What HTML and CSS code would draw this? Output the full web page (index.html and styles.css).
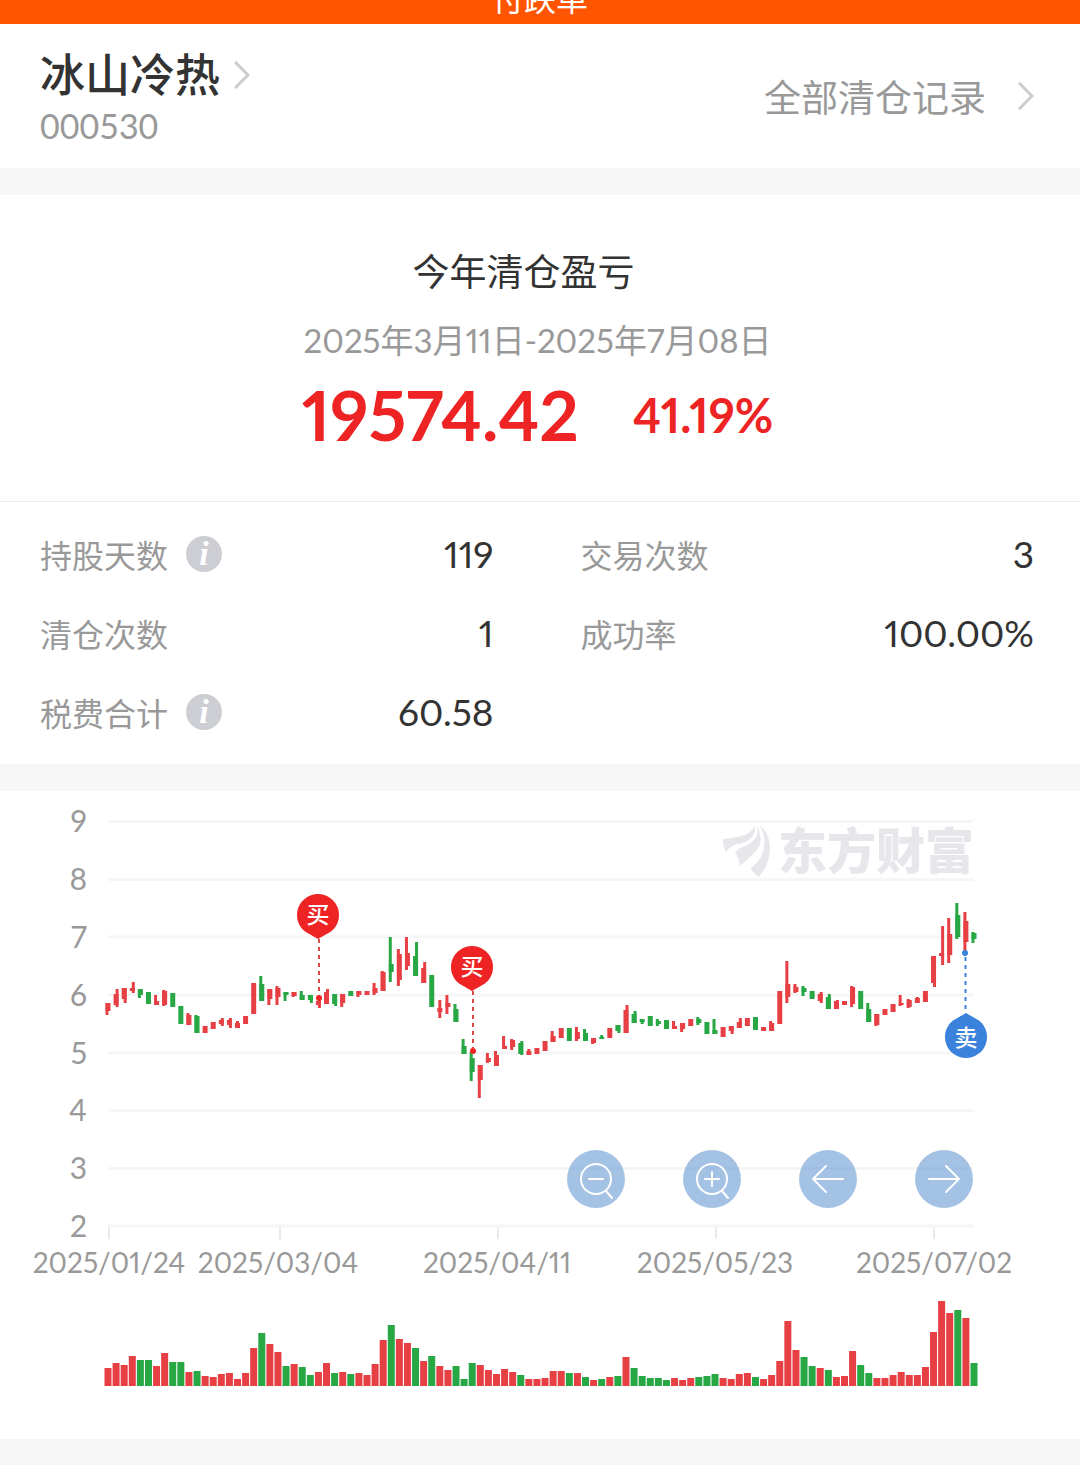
FILE: index.html
```html
<!DOCTYPE html>
<html lang="zh-CN">
<head>
<meta charset="utf-8">
<meta name="viewport" content="width=device-width, initial-scale=1">
<title>付跌单</title>
<link rel="stylesheet" href="styles.css">
</head>
<body>
<div class="topbar"><span class="topbar-title">付跌单</span></div>

<main>
  <header class="stock">
    <div class="stock-id">
      <a class="stock-link" href="#">
        <h1 class="stock-name">冰山冷热</h1>
        <svg class="chevron" viewBox="0 0 16 28" aria-hidden="true"><path d="M1 1 14 14 1 27"/></svg>
      </a>
      <div class="stock-code">000530</div>
    </div>
    <a class="records-link" href="#">
      <span>全部清仓记录</span>
      <svg class="chevron" viewBox="0 0 16 28" aria-hidden="true"><path d="M1 1 14 14 1 27"/></svg>
    </a>
  </header>

  <section class="summary">
    <h2 class="summary-title">今年清仓盈亏</h2>
    <div class="summary-range">2025年3月11日-2025年7月08日</div>
    <div class="summary-figures">
      <strong class="profit">19574.42</strong>
      <strong class="rate">41.19%</strong>
    </div>
  </section>

  <dl class="stats">
    <div class="stat"><dt>持股天数 <button class="info" type="button" aria-label="说明">i</button></dt><dd>119</dd></div>
    <div class="stat"><dt>交易次数</dt><dd>3</dd></div>
    <div class="stat"><dt>清仓次数</dt><dd>1</dd></div>
    <div class="stat"><dt>成功率</dt><dd>100.00%</dd></div>
    <div class="stat"><dt>税费合计 <button class="info" type="button" aria-label="说明">i</button></dt><dd>60.58</dd></div>
  </dl>

  <section class="chart">
    <svg class="chart-svg" viewBox="0 791 1080 648" role="img" aria-label="股价走势">
      <path class="grid" d="M108 821.5H973M108 879.5H973M108 937H973M108 995H973M108 1053H973M108 1110.5H973M108 1168.5H973M108 1226H974"/>
      <path class="tick" d="M109 1227V1239M280 1227V1239M498 1227V1239M716 1227V1239M934 1227V1239"/>
      <g class="watermark">
        <g transform="translate(700 810) scale(.3333)">
          <path d="M69 88C110 80 150 82 165 45C170 88 130 100 112 103C95 106 86 115 78 127C72 115 69 100 69 88Z"/>
          <path d="M169 45C185 80 150 105 128 111C118 114 111 120 107 126L122 168C134 150 185 125 182 85C181 68 175 54 169 45Z"/>
          <path d="M180 47C205 65 212 100 209 130C206 155 195 180 176 200C166 193 158 185 152 176C175 155 190 140 193 105C194 80 188 60 180 47Z"/>
        </g>
        <text x="778" y="869">东方财富</text>
      </g>
      <g class="axis axis-y">
        <text x="87" y="832">9</text><text x="87" y="890">8</text><text x="87" y="948">7</text><text x="87" y="1006">6</text>
        <text x="87" y="1064">5</text><text x="87" y="1121">4</text><text x="87" y="1179">3</text><text x="87" y="1237">2</text>
      </g>
      <g class="axis axis-x">
        <text x="109" y="1273">2025/01/24</text><text x="278" y="1273">2025/03/04</text><text x="497" y="1273">2025/04/11</text>
        <text x="715" y="1273">2025/05/23</text><text x="934" y="1273">2025/07/02</text>
      </g>
      <g id="candles"></g>
      <g id="volumes"></g>
      <g class="marker buy">
        <path class="lead" d="M319 939V996"/><circle cx="319" cy="998" r="3"/>
        <path d="M318 894A21 21 0 0 1 331 931.500L318 939L305 931.500A21 21 0 0 1 318 894Z"/>
        <text x="318" y="923">买</text>
      </g>
      <g class="marker buy">
        <path class="lead" d="M473 991V1048"/><circle cx="473" cy="1051" r="3"/>
        <path d="M472 946A21 21 0 0 1 485 983.500L472 991L459 983.500A21 21 0 0 1 472 946Z"/>
        <text x="472" y="975">买</text>
      </g>
      <g class="marker sell">
        <path class="lead" d="M965.500 957V1013"/><circle cx="965" cy="953" r="3"/>
        <path d="M966 1058A21 21 0 0 1 953 1020.500L966 1013L979 1020.500A21 21 0 0 1 966 1058Z"/>
        <text x="966" y="1046">卖</text>
      </g>
    </svg>
    <div class="chart-tools">
      <button type="button" aria-label="缩小"><svg viewBox="0 0 58 58"><circle cx="29" cy="29" r="15"/><path d="M22 29H36M39 41 45 48"/></svg></button>
      <button type="button" aria-label="放大"><svg viewBox="0 0 58 58"><circle cx="29" cy="29" r="15"/><path d="M22 29H36M29 22V36M39 41 45 48"/></svg></button>
      <button type="button" aria-label="向左"><svg viewBox="0 0 58 58"><path d="M44 29H14M27 16 14 29 27 42"/></svg></button>
      <button type="button" aria-label="向右"><svg viewBox="0 0 58 58"><path d="M14 29H44M31 16 44 29 31 42"/></svg></button>
    </div>
  </section>
</main>
<script src="chart.js"></script>
</body>
</html>
```

FILE: styles.css
```css
* { box-sizing: border-box; }

body {
  margin: 0;
  background: #fff;
  color: #333;
  font-family: Lato, "Noto Sans CJK SC", sans-serif;
  font-variant-numeric: proportional-nums;
}

a { color: inherit; text-decoration: none; }
button { border: 0; padding: 0; cursor: pointer; }

.topbar {
  display: flex;
  align-items: flex-end;
  justify-content: center;
  height: 24px;
  padding-bottom: 9px;
  overflow: hidden;
  background: #ff5400;
  color: #fff;
}
.topbar-title { font-size: 32px; line-height: 32px; }

.stock {
  display: flex;
  justify-content: space-between;
  padding: 26px 46px 17px 40px;
}
.stock-link { display: flex; align-items: center; gap: 14px; }
.stock-name { margin: 0; font-size: 45px; line-height: 50px; font-weight: 500; }
.stock-code { color: #999; font-size: 34px; line-height: 51px; font-variant-numeric: tabular-nums; }
.records-link {
  display: flex;
  align-items: center;
  gap: 32px;
  height: 92px;
  color: #999;
  font-size: 37px;
}
.chevron { width: 16px; height: 28px; fill: none; stroke: #ccc; stroke-width: 3; }

.summary {
  padding: 50px 5px 46px 0;
  border-top: 27px solid #f7f7f7;
  border-bottom: 1px solid #eee;
  text-align: center;
}
.summary-title { margin: 0 28px 0 0; font-size: 37px; line-height: 54px; font-weight: 400; }
.summary-range { margin-top: 18px; color: #999; font-size: 33px; line-height: 46px; }
.summary-figures {
  display: flex;
  align-items: center;
  justify-content: center;
  gap: 54px;
  margin-top: 12px;
  line-height: 80px;
  color: #ee2324;
}
.profit { font-size: 69px; }
.rate { font-size: 47px; }

.stats {
  display: grid;
  grid-template-columns: 1fr 1fr;
  column-gap: 87px;
  margin: 0;
  padding: 12px 46px 13px 40px;
}
.stat { display: flex; align-items: center; justify-content: space-between; height: 79px; }
.stat dt { display: flex; align-items: center; gap: 18px; color: #999; font-size: 32px; }
.stat dd { margin: 0; font-size: 37px; }
.info {
  width: 36px;
  height: 36px;
  border-radius: 50%;
  background: #cdced3;
  color: #fff;
  font: italic bold 34px/34px "Liberation Serif", serif;
}

.chart {
  position: relative;
  border-top: 27px solid #f7f7f7;
  border-bottom: 26px solid #f7f7f7;
}
.chart-svg { display: block; width: 100%; }
.grid { stroke: #f6f6f6; stroke-width: 3; }
.tick { stroke: #eaeaea; stroke-width: 2; }
.watermark { fill: #e6e6eb; }
.watermark text { font-size: 49px; font-weight: 900; }
.axis { fill: #999; }
.axis-y { font-size: 30px; text-anchor: end; }
.axis-x { font-size: 28px; text-anchor: middle; }
.up { fill: #e64045; }
.down { fill: #28a745; }
.marker text { fill: #fff; font-size: 23px; font-weight: 500; text-anchor: middle; }
.marker .lead { fill: none; stroke-width: 2; stroke-dasharray: 4 4; }
.buy { fill: #ee2324; stroke: none; }
.buy .lead { stroke: #d94a4c; }
.sell { fill: #3a82dc; }
.sell .lead { stroke: #3a82dc; }

.chart-tools {
  position: absolute;
  top: 359px;
  right: 107px;
  display: flex;
  gap: 58px;
}
.chart-tools button { width: 58px; height: 58px; border-radius: 50%; background: rgba(73, 133, 201, .5); }
.chart-tools svg { display: block; fill: none; stroke: #fff; stroke-width: 2; stroke-linecap: round; stroke-linejoin: round; }
```

FILE: chart.js
```js
// Candle: body top, body bottom, wick top, wick bottom, wick side.
const candles = [
  [1003,1011,1003,1015,-1],[994,1005,989,1007,1],[988,999,988,1003,1],[988,991,982,993,1],[989,995,989,998,-1],
  [992,1004],[1001,1005,995,1005,-1],[991,1005,990,1006,-1],[993,1007],[1006,1024],
  [1015,1025,1013,1025,-1],[1016,1033,1015,1033,-1],[1026,1033],[1022,1029],[1020,1024,1018,1026,1],
  [1020,1025,1018,1028,1],[1023,1028,1021,1028,0],[1016,1024],[983,1014],[984,1001,976,1001,-1],
  [989,999,989,1005,-1],[988,997,986,1005,-1],[992,995,992,1001,-1],[992,996,992,997,-1],[995,1000,991,1000,-1],
  [995,1000,995,1003,1],[1001,1005,997,1008,1],[992,1004,989,1004,1],[994,1004,994,1006,1],[994,1003,994,1007,-1],
  [991,996],[991,995,991,997,-1],[991,995],[988,993,983,995,-1],[972,991,971,991,-1],
  [964,972,937,982,-1],[954,980,949,986,-1],[953,966,937,970,-1],[956,976,942,976,1],[968,983,962,983,1],
  [975,1007],[1008,1012,1000,1018,0],[1003,1007,995,1014,-1],[1009,1022,1004,1022,-1],[1046,1054,1039,1054,-1],
  [1058,1072,1052,1081,-1],[1065,1080,1065,1098,-1],[1058,1062,1053,1063,-1],[1055,1066,1051,1066,-1],[1046,1049,1036,1049,-1],
  [1040,1047,1039,1050,-1],[1043,1054,1041,1055,1],[1051,1055,1049,1055,0],[1048,1054],[1041,1051],
  [1036,1042,1031,1042,-1],[1028,1038],[1028,1041],[1032,1039,1027,1041,-1],[1033,1041,1029,1041,-1],
  [1038,1043,1038,1044,-1],[1037,1039,1035,1039,0],[1028,1038],[1025,1031,1025,1033,1],[1010,1033,1005,1033,1],
  [1014,1023,1011,1023,1],[1019,1022,1019,1024,0],[1016,1026],[1021,1024,1019,1026,-1],[1020,1029],
  [1026,1029,1021,1029,-1],[1023,1029,1023,1032,-1],[1019,1026],[1019,1023,1017,1025,-1],[1022,1034],
  [1030,1034,1019,1034,-1],[1027,1037],[1026,1031,1026,1034,1],[1022,1028,1018,1028,1],[1018,1026],
  [1017,1030],[1027,1031],[1023,1031,1021,1031,-1],[991,1024],[984,997,961,1003,-1],
  [987,992,984,993,-1],[988,992,986,996,-1],[991,999],[994,1001,992,1003,1],[997,1009,994,1009,1],
  [1001,1009,1000,1009,1],[1001,1005],[987,1004,986,1007,-1],[991,1009],[1009,1022,1003,1022,-1],
  [1014,1025,1014,1026,-1],[1009,1015],[1004,1012],[1003,1005,995,1006,-1],[1000,1007,999,1008,-1],
  [998,1003,997,1003,0],[991,1002],[956,983,956,987,1],[953,956,926,965,1],[934,955,918,963,-1],
  [915,937,903,939,-1],[921,942,912,952,-1],[933,939,932,943,-1]
];

const volumes = [
  18,23,21,30,26,26,20,33,24,24,14,15,10,9,12,13,7,13,38,53,42,34,20,22,19,11,14,23,13,14,12,13,11,22,46,61,
  47,43,38,25,30,20,16,20,7,23,21,16,12,17,14,11,7,7,8,15,15,13,13,9,6,7,9,10,29,18,10,8,8,6,8,6,
  8,9,10,12,8,7,12,13,9,7,11,25,65,36,29,20,18,16,9,10,35,21,13,8,8,11,14,11,11,19,54,85,73,76,68,23
];

// Indexes of the days that closed lower.
const falling = new Set([
  4,5,8,9,11,19,22,24,25,28,30,35,38,40,43,44,45,51,57,59,61,63,65,66,67,68,69,73,74,75,80,86,87,89,93,94,105,107
]);

const FIRST_X = 108;
const LAST_X = 974;
const BASELINE = 1386;
const step = (LAST_X - FIRST_X) / (volumes.length - 1);

function addBar(group, x, top, width, bottom, colour) {
  const bar = document.createElementNS('http://www.w3.org/2000/svg', 'rect');
  bar.setAttribute('x', x - width / 2);
  bar.setAttribute('y', top);
  bar.setAttribute('width', width);
  bar.setAttribute('height', bottom - top);
  bar.setAttribute('class', colour);
  group.appendChild(bar);
}

const candleGroup = document.getElementById('candles');
const volumeGroup = document.getElementById('volumes');

volumes.forEach((height, i) => {
  const x = FIRST_X + i * step;
  const colour = falling.has(i) ? 'down' : 'up';
  const [top, bottom, wickTop, wickBottom, side] = candles[i];
  addBar(candleGroup, x, top, 5, bottom, colour);
  if (wickTop) addBar(candleGroup, x + side, wickTop, 3, wickBottom, colour);
  addBar(volumeGroup, x, BASELINE - height, 7, BASELINE, colour);
});
```
